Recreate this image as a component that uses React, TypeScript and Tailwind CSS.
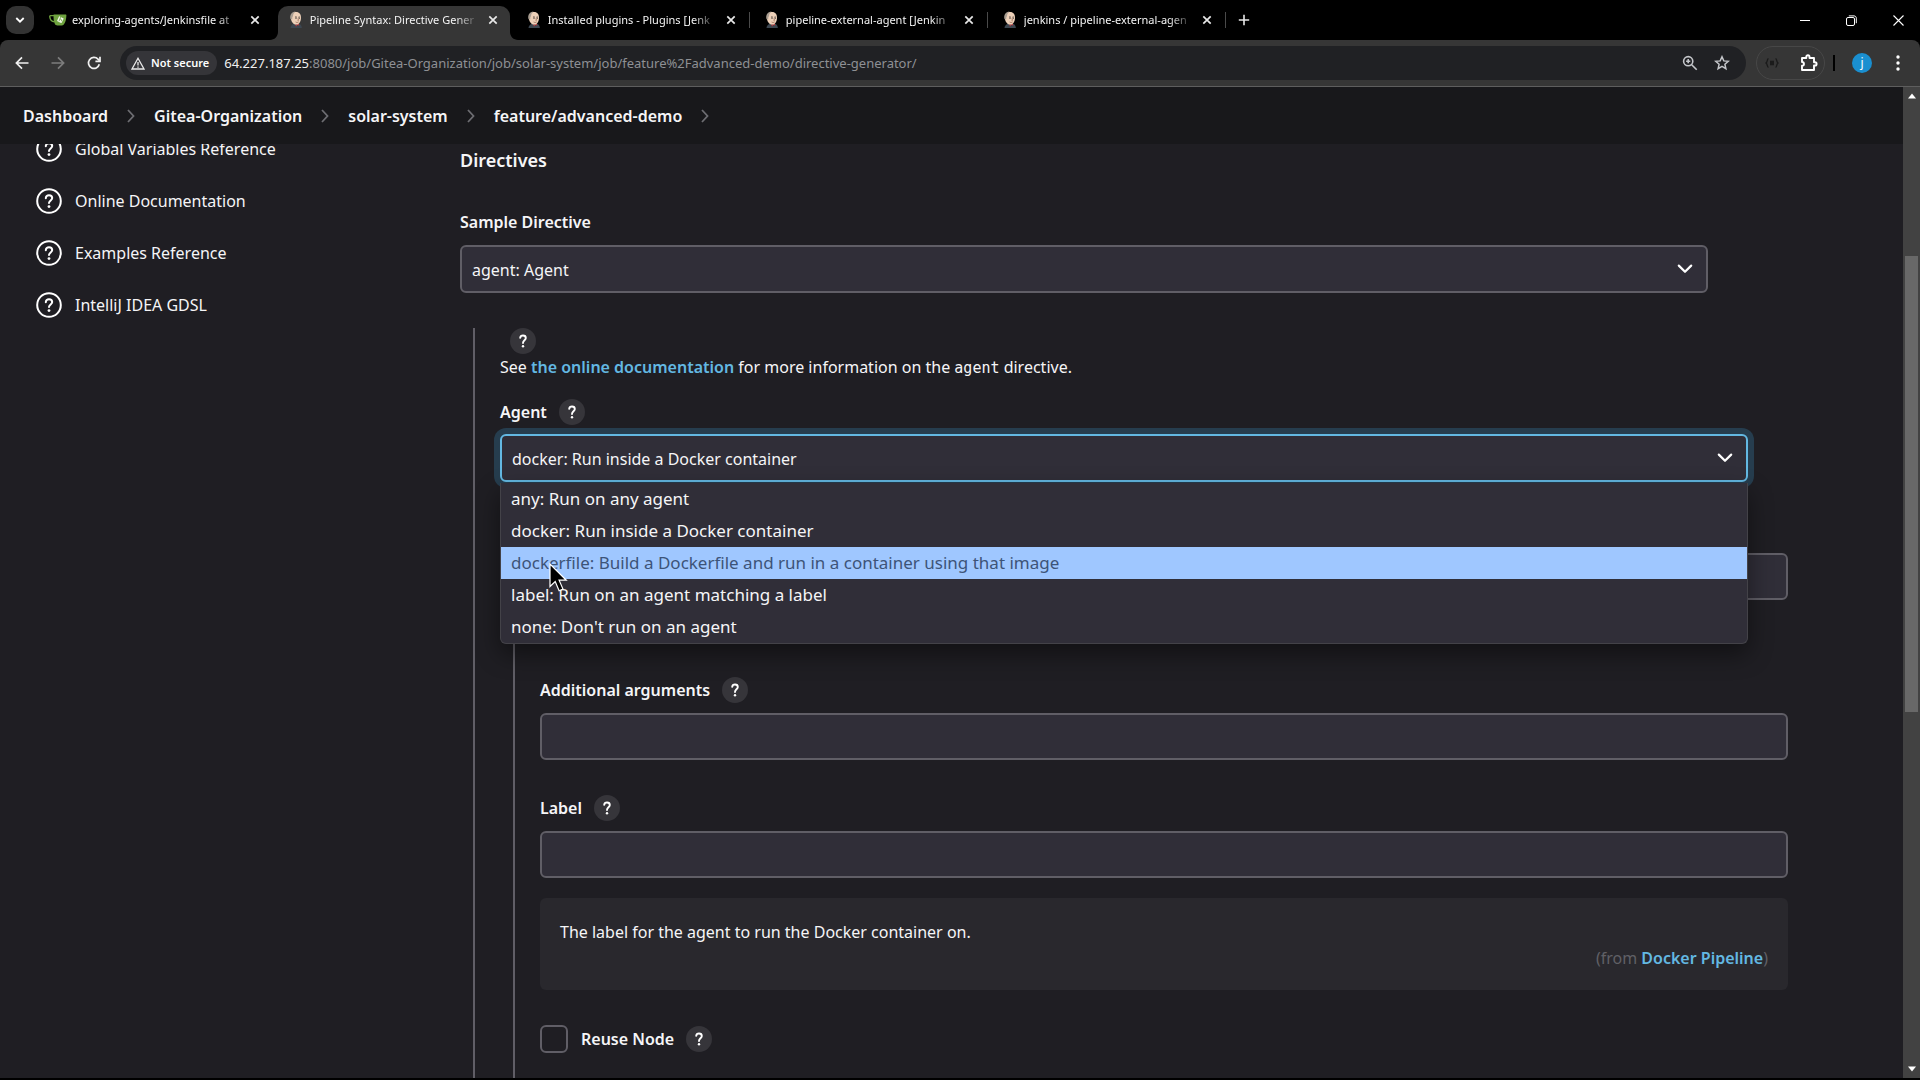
import React from "react";

const tabs = [
  { title: "exploring-agents/Jenkinsfile at", icon: "gitea", active: false, divider: false },
  { title: "Pipeline Syntax: Directive Gener", icon: "jenkins", active: true, divider: false },
  { title: "Installed plugins - Plugins [Jenk", icon: "jenkins", active: false, divider: true },
  { title: "pipeline-external-agent [Jenkin", icon: "jenkins", active: false, divider: true },
  { title: "jenkins / pipeline-external-agen", icon: "jenkins", active: false, divider: true },
];

const crumbs = ["Dashboard", "Gitea-Organization", "solar-system", "feature/advanced-demo"];

const sideLinks = [
  "Global Variables Reference",
  "Online Documentation",
  "Examples Reference",
  "IntelliJ IDEA GDSL",
];

const agentOptions = [
  "any: Run on any agent",
  "docker: Run inside a Docker container",
  "dockerfile: Build a Dockerfile and run in a container using that image",
  "label: Run on an agent matching a label",
  "none: Don't run on an agent",
];

const HIGHLIGHTED = 2;

function GiteaIcon() {
  return (
    <svg viewBox="0 0 18 16" className="h-4 w-[18px] shrink-0" aria-hidden="true">
      <path d="M5.5 3.6H1.6C.9 3.6.7 4.2.8 5c.3 2.6 1.8 4.6 4.7 4.8" fill="none" stroke="#6fa33f" strokeWidth="1.4" />
      <path d="M4.6 2.6h12.2c.4 0 .6.2.6.6-.1 4-1 7.3-2.6 9.2-.6.7-1.3 1-2.2 1H8.4c-1.1 0-2-.4-2.500-1.400C4.800 9.900 4.400 6.500 4.600 2.600z" fill="#6fa33f" />
      <path d="M10.6 4.4l3.7 1.8c.3.1.4.4.2.7l-1.7 3.7c-.1.3-.5.4-.8.3L8.500 9.200c-.3-.2-.4-.5-.3-.800l1.700-3.600c.1-.4.4-.5.7-.4z" fill="#f4f8ee" />
      <path d="M11.7 4.8L10 9.2M11 6.8l1.600 1v1.400" stroke="#6fa33f" strokeWidth=".8" fill="none" />
    </svg>
  );
}

function JenkinsIcon() {
  return (
    <svg viewBox="0 0 16 18" className="h-[18px] w-4 shrink-0" aria-hidden="true">
      <path d="M2.500 17c.2-2 1.400-3.400 3-4l5.500-.3c1.700.6 2.700 2 2.900 4.300z" fill="#3c4650" />
      <path d="M7.300 12.800l1.200 1 2.200-1.200.6 2-2.100-.5-1.300 1.600z" fill="#c8373a" />
      <path d="M2.800 7.200C2.600 3.300 4.600.9 8 .9c3.500 0 5.200 2.400 5 6-.2 3.800-2 6.700-4.600 6.700-2.800 0-5.200-2.600-5.600-6.400z" fill="#edd0b8" />
      <path d="M2.600 8.300C1.500 4.200 3.300.6 7.800.5 6 1.500 5 3 5 5.200c-.7.600-.9 1.800-.6 3.100z" fill="#a89d91" />
      <path d="M7 6.200c.5-.5 1.300-.5 1.800-.1M10.400 6.200c.5-.4 1.100-.4 1.500 0" stroke="#463c36" strokeWidth=".8" fill="none" />
      <circle cx="8" cy="7.200" r=".6" fill="#2a2522" />
      <circle cx="11.200" cy="7.200" r=".6" fill="#2a2522" />
      <path d="M9.900 7.500l.6 1.800-.9.200M7.600 11c1 .6 2.100.6 3-.1" stroke="#8c5a48" strokeWidth=".7" fill="none" />
    </svg>
  );
}

function CloseGlyph() {
  return (
    <svg viewBox="0 0 10 10" className="size-2.5" fill="none" stroke="#e8e8e8" strokeWidth="1.7" aria-hidden="true">
      <path d="M1.300 1.300l7.400 7.400M8.700 1.300L1.300 8.700" />
    </svg>
  );
}

function BrowserTab({ tab }: { tab: (typeof tabs)[number] }) {
  return (
    <div className="relative flex w-[238px] pr-0.5 pl-1">
      <div
        className={
          tab.active
            ? "flex min-w-0 flex-1 items-center rounded-t-[10px] bg-[#363636] pr-3 pb-1.5 pl-[9px]"
            : "flex min-w-0 flex-1 items-center pr-3 pb-1.5 pl-[9px]"
        }
      >
        <span className="flex w-[18px] justify-center">{tab.icon === "gitea" ? <GiteaIcon /> : <JenkinsIcon />}</span>
        <span className="ml-[5px] w-[171px] text-[11px] leading-5 whitespace-nowrap text-[#f4f4f4] [mask-image:linear-gradient(to_right,#000_86%,transparent_100%)]">
          {tab.title}
        </span>
        <button type="button" aria-label={`Close ${tab.title}`} className="ml-[9px] flex size-2.5 items-center justify-center">
          <CloseGlyph />
        </button>
      </div>
      {tab.active && (
        <>
          <svg viewBox="0 0 8 8" className="absolute bottom-0 -left-1 size-2" aria-hidden="true">
            <path d="M8 0v8H0c4.400 0 8-3.600 8-8z" fill="#363636" />
          </svg>
          <svg viewBox="0 0 8 8" className="absolute -right-1.5 bottom-0 size-2" aria-hidden="true">
            <path d="M0 0v8h8C3.600 8 0 4.400 0 0z" fill="#363636" />
          </svg>
        </>
      )}
      {tab.divider && <span className="absolute top-1.5 right-0 h-4 w-px bg-[#4a4a4a]" />}
    </div>
  );
}

function TabStrip() {
  return (
    <header className="flex h-10 shrink-0 items-stretch bg-black">
      <div className="flex w-9 items-center pl-1.5">
        <button type="button" aria-label="Search tabs" className="flex h-7 w-7 items-center justify-center rounded-[10px] bg-[#333]">
          <svg viewBox="0 0 10 8" className="h-2 w-2.5" fill="none" stroke="#fff" strokeWidth="1.8" aria-hidden="true">
            <path d="M1.300 2L5 5.700 8.700 2" />
          </svg>
        </button>
      </div>
      <nav aria-label="Tabs" className="flex items-stretch pt-1.5">
        {tabs.map((tab) => (
          <BrowserTab key={tab.title} tab={tab} />
        ))}
      </nav>
      <button type="button" aria-label="New tab" className="ml-3 flex items-center text-white">
        <svg viewBox="0 0 12 12" className="size-3" stroke="#e8e8e8" strokeWidth="1.6" aria-hidden="true">
          <path d="M6 .8v10.400M.8 6h10.400" />
        </svg>
      </button>
      <div className="ml-auto flex items-center gap-9 pr-4">
        <button type="button" aria-label="Minimize">
          <svg viewBox="0 0 10 10" className="size-2.5" stroke="#fff" aria-hidden="true">
            <path d="M0 5.500h10" />
          </svg>
        </button>
        <button type="button" aria-label="Restore">
          <svg viewBox="0 0 11 11" className="size-[11px]" fill="none" stroke="#fff" aria-hidden="true">
            <rect x=".5" y="2.500" width="8" height="8" rx="1.500" />
            <path d="M2.800 .9h5.200c1.400 0 2.300.9 2.300 2.300v5" />
          </svg>
        </button>
        <button type="button" aria-label="Close window">
          <svg viewBox="0 0 11 11" className="size-[11px]" stroke="#fff" strokeWidth="1.1" aria-hidden="true">
            <path d="M.5.500l10 10M10.500.500l-10 10" />
          </svg>
        </button>
      </div>
    </header>
  );
}

function Toolbar() {
  return (
    <div className="bg-black">
      <div className="flex h-[47px] items-center rounded-t-lg border-b border-[#5e5e5e] bg-[#363636]">
        <div className="flex w-[120px] shrink-0 items-center gap-[22px] pl-[15px]">
          <button type="button" aria-label="Back">
            <svg viewBox="0 0 14 14" className="size-3.5" fill="none" stroke="#f1f1f1" strokeWidth="1.7" aria-hidden="true">
              <path d="M13.500 7H1.500M7 1.400L1.400 7 7 12.600" />
            </svg>
          </button>
          <button type="button" aria-label="Forward">
            <svg viewBox="0 0 14 14" className="size-3.5" fill="none" stroke="#7d7d7d" strokeWidth="1.7" aria-hidden="true">
              <path d="M.5 7h12M7 1.400L12.600 7 7 12.600" />
            </svg>
          </button>
          <button type="button" aria-label="Reload">
            <svg viewBox="0 0 14 14" className="size-3.5" fill="none" stroke="#f1f1f1" strokeWidth="1.7" aria-hidden="true">
              <path d="M12.300 8.300A5.500 5.500 0 1 1 11 3.200l1.500 1.500" />
              <path d="M13 .8v4.600H8.400" />
            </svg>
          </button>
        </div>
        <div className="flex h-[34px] min-w-0 flex-1 items-center rounded-full bg-[#202124] pr-4 pl-1.5">
          <button
            type="button"
            className="flex h-6 shrink-0 items-center gap-1.5 rounded-full bg-[#353539] pr-2 pl-[5px] text-[11px] font-semibold text-white"
          >
            <svg viewBox="0 0 14 13" className="h-[13px] w-3.5" fill="none" stroke="#e8e8e8" strokeWidth="1.3" aria-hidden="true">
              <path d="M7 1.300L13 12H1z" />
              <path d="M7 5v3.400M7 9.500v1.300" />
            </svg>
            Not secure
          </button>
          <p className="ml-[7px] min-w-0 flex-1 truncate text-[13px] text-[#8e9094]">
            <span className="text-[#f0f0f0]">64.227.187.25</span>
            :8080/job/Gitea-Organization/job/solar-system/job/feature%2Fadvanced-demo/directive-generator/
          </p>
          <button type="button" aria-label="Zoom">
            <svg viewBox="0 0 16 16" className="size-4" fill="none" stroke="#c4c6ca" strokeWidth="1.6" aria-hidden="true">
              <circle cx="6.200" cy="6.200" r="4.600" />
              <path d="M9.700 9.700l5 5M6.200 4.100v4.200M4.100 6.200h4.200" />
            </svg>
          </button>
          <button type="button" aria-label="Bookmark this page" className="ml-4">
            <svg viewBox="0 0 16 16" className="size-4" fill="none" stroke="#c4c6ca" strokeWidth="1.5" aria-hidden="true">
              <path d="M8 1.800l1.800 4.100 4.500.4-3.400 3 1 4.400L8 11.400l-3.900 2.300 1-4.400-3.400-3 4.500-.4z" />
            </svg>
          </button>
        </div>
        <div className="ml-2.5 flex h-[34px] w-[69px] shrink-0 items-center justify-between rounded-full border border-[#474747] pr-1.5 pl-2">
          <button type="button" aria-label="JSON extension">
            <svg viewBox="0 0 14 10" className="h-2.5 w-3.5" fill="none" stroke="#1b1b1b" strokeWidth="1.4" aria-hidden="true">
              <path d="M3.500.8C1.800.8 2.800 4 1 5c1.800 1 .8 4.200 2.500 4.200M10.500.8C12.200.8 11.200 4 13 5c-1.800 1-.8 4.200-2.500 4.200M5 3.500h4M5 5h4M5 6.500h4" />
            </svg>
          </button>
          <button type="button" aria-label="Extensions">
            <svg viewBox="0 0 18 18" className="size-[18px]" aria-hidden="true">
              <path
                d="M2 4h4.300V2.800a1.600 1.600 0 0 1 3.200 0V4H14v4.300h1a1.600 1.600 0 0 1 0 3.200h-1V16H2v-4.200c2.600-.2 2.600-3.600 0-3.800z"
                fill="none"
                stroke="#fff"
                strokeWidth="1.9"
                strokeLinejoin="round"
              />
            </svg>
          </button>
        </div>
        <span className="ml-2 h-4 w-0.5 shrink-0 bg-black" />
        <button type="button" className="ml-[17px] flex size-5 shrink-0 items-center justify-center rounded-full bg-[#1a8fd0] text-xs text-white">
          j
        </button>
        <button type="button" aria-label="Browser menu" className="mr-5 ml-6">
          <svg viewBox="0 0 4 16" className="h-4 w-1" fill="#fff" aria-hidden="true">
            <circle cx="2" cy="2" r="1.700" />
            <circle cx="2" cy="8" r="1.700" />
            <circle cx="2" cy="14" r="1.700" />
          </svg>
        </button>
      </div>
    </div>
  );
}

function HelpButton({ topic }: { topic: string }) {
  return (
    <button
      type="button"
      aria-label={`Help for ${topic}`}
      className="flex size-[26px] shrink-0 items-center justify-center rounded-full bg-[#36353a]"
    >
      <svg viewBox="0 0 10 14" className="h-3.5 w-2.5" fill="none" stroke="#fff" strokeWidth="1.9" aria-hidden="true">
        <path d="M2.200 3.800C2.400 2.300 3.500 1.500 5 1.500s2.800 1 2.800 2.500C7.800 6.200 5 6.400 5 9" strokeLinecap="round" />
        <circle cx="5" cy="12.200" r="1.200" fill="#fff" stroke="none" />
      </svg>
    </button>
  );
}

function SelectChevron() {
  return (
    <svg
      viewBox="0 0 16 10"
      className="pointer-events-none absolute top-[19px] right-[15px] h-2.5 w-4"
      fill="none"
      stroke="#fff"
      strokeWidth="2.2"
      strokeLinecap="round"
      strokeLinejoin="round"
      aria-hidden="true"
    >
      <path d="M1.800 1.600L8 7.800l6.200-6.200" />
    </svg>
  );
}

function TextField({ id, label }: { id: string; label: string }) {
  return (
    <div>
      <div className="flex h-[26px] items-center gap-3">
        <label htmlFor={id} className="font-semibold">
          {label}
        </label>
        <HelpButton topic={label} />
      </div>
      <input
        id={id}
        type="text"
        className="mt-2.5 block h-[47px] w-full rounded-md border-2 border-[#605e66] bg-[#302e38] px-2.5 outline-none"
      />
    </div>
  );
}

function Pointer() {
  return (
    <svg viewBox="0 0 19 29" className="pointer-events-none absolute top-20 left-[49px] h-[29px] w-[19px]" aria-hidden="true">
      <path
        d="M1 1v22.500l5.200-4.900 3.900 9.200 3.900-1.700-3.900-8.900h7.200z"
        fill="#000"
        stroke="#fff"
        strokeWidth="1.2"
      />
    </svg>
  );
}

function Sidebar() {
  return (
    <aside className="w-[460px] shrink-0 overflow-hidden">
      <nav aria-label="References" className="-mt-[21px] pl-9">
        {sideLinks.map((text) => (
          <a key={text} href="#" className="flex h-[52px] items-center gap-[13px]">
            <svg viewBox="0 0 26 26" className="size-[26px]" fill="none" stroke="#fff" strokeWidth="2" aria-hidden="true">
              <circle cx="13" cy="13" r="11.800" />
              <path d="M9.800 10.300c0-1.900 1.400-3.100 3.200-3.100s3.200 1.200 3.200 2.900c0 2.300-3.200 2.500-3.200 5" strokeLinecap="round" />
              <circle cx="13" cy="18.600" r="1.400" fill="#fff" stroke="none" />
            </svg>
            {text}
          </a>
        ))}
      </nav>
    </aside>
  );
}

function AgentSelect() {
  return (
    <div className="relative z-10 mt-[9px] max-w-[1248px]">
      <select
        id="agent"
        defaultValue={agentOptions[1]}
        className="block h-12 w-full appearance-none rounded-md border-2 border-[#63b8e2] bg-[#302e38] px-2.5 pt-0.5 ring-[6px] ring-[#263d4e] outline-none"
      >
        {agentOptions.map((option) => (
          <option key={option}>{option}</option>
        ))}
      </select>
      <SelectChevron />
      <div className="absolute inset-x-0 top-full mt-px">
        <ul
          role="listbox"
          aria-label="Agent options"
          className="rounded-b-md border border-t-0 border-[#434248] bg-[#302e38] text-[17px] leading-8 shadow-[0_10px_24px_rgba(0,0,0,0.45)]"
        >
          {agentOptions.map((option, i) => (
            <li
              key={option}
              role="option"
              aria-selected={i === HIGHLIGHTED}
              className={i === HIGHLIGHTED ? "bg-[#9fc7ff] px-2.5 text-[#3d5478]" : "px-2.5"}
            >
              {option}
            </li>
          ))}
        </ul>
        <Pointer />
      </div>
    </div>
  );
}

function DirectiveForm() {
  return (
    <main className="flex min-w-0 flex-1 flex-col pt-[3px] pr-5">
      <h1 className="text-lg leading-[26px] font-semibold">Directives</h1>
      <label htmlFor="directive" className="mt-9 font-semibold">
        Sample Directive
      </label>
      <div className="relative mt-2.5 max-w-[1248px]">
        <select
          id="directive"
          className="block h-12 w-full appearance-none rounded-md border-2 border-[#605e66] bg-[#302e38] px-2.5 pt-0.5 outline-none"
        >
          <option>agent: Agent</option>
        </select>
        <SelectChevron />
      </div>

      <section className="mt-[35px] ml-[13px] flex flex-1 flex-col border-l-2 border-[#605e66] pl-[25px]">
        <div className="pl-2.5">
          <HelpButton topic="the agent directive" />
        </div>
        <p>
          See{" "}
          <a href="#" className="font-semibold text-[#63b8e2]">
            the online documentation
          </a>{" "}
          for more information on the <code className="font-['DejaVu_Sans_Mono',monospace] text-[15px]">agent</code> directive.
        </p>
        <div className="mt-[18px] flex h-[26px] items-center gap-3">
          <label htmlFor="agent" className="font-semibold">
            Agent
          </label>
          <HelpButton topic="Agent" />
        </div>
        <AgentSelect />

        <div className="mt-[35px] ml-[13px] flex-1 border-l-2 border-[#605e66] pl-[25px]">
          <div className="max-w-[1248px]">
            <div className="pt-9">
              <input
                type="text"
                aria-label="Image"
                className="block h-[47px] w-full rounded-md border-2 border-[#605e66] bg-[#302e38] px-2.5 outline-none"
              />
            </div>
            <div className="mt-[77px] flex flex-col gap-[35px]">
              <TextField id="arguments" label="Additional arguments" />
              <TextField id="label" label="Label" />
            </div>
            <div className="mt-5 rounded-md bg-[#29282d] px-5 pt-[21px] pb-[19px]">
              <p>The label for the agent to run the Docker container on.</p>
              <p className="text-right text-[#606066]">
                (from{" "}
                <a href="#" className="font-semibold text-[#63b8e2]">
                  Docker Pipeline
                </a>
                )
              </p>
            </div>
            <div className="mt-[35px] flex h-7 items-center">
              <input id="reuse" type="checkbox" className="size-7 appearance-none rounded-md border-2 border-[#605e66]" />
              <label htmlFor="reuse" className="mr-3 ml-[13px] font-semibold">
                Reuse Node
              </label>
              <HelpButton topic="Reuse Node" />
            </div>
          </div>
        </div>
      </section>
    </main>
  );
}

function Scrollbar() {
  return (
    <div className="flex w-[17px] shrink-0 flex-col items-center bg-[#424242]" aria-hidden="true">
      <svg viewBox="0 0 10 6" className="mt-1.5 h-1.5 w-2.5" fill="#fff">
        <path d="M5 .5L9 5.500H1z" />
      </svg>
      <span className="min-h-0 flex-[157]" />
      <span className="w-[13px] flex-[455] bg-[#686868]" />
      <span className="min-h-0 flex-[354]" />
      <svg viewBox="0 0 10 6" className="mb-1.5 h-1.5 w-2.5" fill="#fff">
        <path d="M5 5.500L9 .5H1z" />
      </svg>
    </div>
  );
}

export default function App() {
  return (
    <div className="flex h-screen flex-col overflow-hidden bg-black pb-0.5 font-['Noto_Sans',sans-serif] text-base leading-[26px] text-[#f5f5f7]">
      <TabStrip />
      <Toolbar />
      <div className="flex min-h-0 flex-1">
        <div className="flex min-w-0 flex-1 flex-col bg-[#1f1e23]">
          <nav aria-label="Breadcrumb" className="flex h-[57px] shrink-0 items-center bg-[#18181b] pl-[23px] font-semibold">
            {crumbs.map((crumb) => (
              <React.Fragment key={crumb}>
                <a href="#">{crumb}</a>
                <svg viewBox="0 0 8 14" className="mx-[19px] h-3.5 w-2" fill="none" stroke="#6d6d72" strokeWidth="1.8" aria-hidden="true">
                  <path d="M1 1l5.500 6L1 13" />
                </svg>
              </React.Fragment>
            ))}
          </nav>
          <div className="flex min-h-0 flex-1 overflow-hidden">
            <Sidebar />
            <DirectiveForm />
          </div>
        </div>
        <Scrollbar />
      </div>
    </div>
  );
}
